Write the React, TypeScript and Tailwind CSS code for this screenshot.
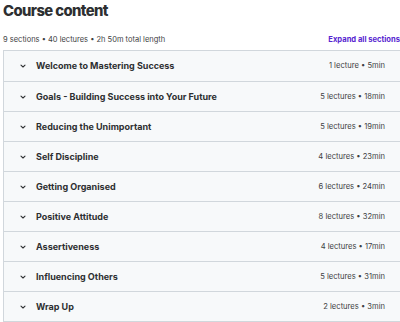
import React from "react";

const sections: [string, string][] = [
  ["Welcome to Mastering Success", "1 lecture • 5min"],
  ["Goals - Building Success into Your Future", "5 lectures • 18min"],
  ["Reducing the Unimportant", "5 lectures • 19min"],
  ["Self Discipline", "4 lectures • 23min"],
  ["Getting Organised", "6 lectures • 24min"],
  ["Positive Attitude", "8 lectures • 32min"],
  ["Assertiveness", "4 lectures • 17min"],
  ["Influencing Others", "5 lectures • 31min"],
  ["Wrap Up", "2 lectures • 3min"],
];

function Chevron() {
  return (
    <svg width="8" height="8" viewBox="0 0 8 8" className="shrink-0">
      <path d="M2 3.2 L4 5 L6 3.2" fill="none" stroke="#2d2f31" strokeWidth="1.1" strokeLinecap="round" strokeLinejoin="round" />
    </svg>
  );
}

export default function App() {
  return (
    <div className="w-[400px] h-[322px] overflow-hidden bg-white text-[#2d2f31]" style={{ fontFamily: "Inter, 'Noto Sans', sans-serif" }}>
      <div className="pl-[3px]">
        <h2 className="pt-[1px] text-[14.8px] leading-[20px] font-extrabold tracking-[-0.6px]">Course content</h2>
        <div className="mt-[12px] flex items-center justify-between h-[14px]">
          <span className="text-[7.5px] text-[#3e4143]">9 sections • 40 lectures • 2h 50m total length</span>
          <span className="text-[7.6px] font-bold text-[#5624d0] whitespace-nowrap">Expand all sections</span>
        </div>
        <div className="mt-[3px] w-[420px] border border-[#d1d7dc]">
          {sections.map(([t, m], i) => (
            <div
              key={t}
              className={`h-[30px] bg-[#f7f9fa] flex items-center ${i > 0 ? "border-t border-[#d1d7dc]" : ""}`}
            >
              <div className="w-[381px] flex items-center pl-[15px]">
                <Chevron />
                <span className="ml-[9px] text-[9px] font-bold">{t}</span>
                <span className="ml-auto text-[7.6px] text-[#3e4143]">{m}</span>
              </div>
            </div>
          ))}
        </div>
      </div>
    </div>
  );
}
